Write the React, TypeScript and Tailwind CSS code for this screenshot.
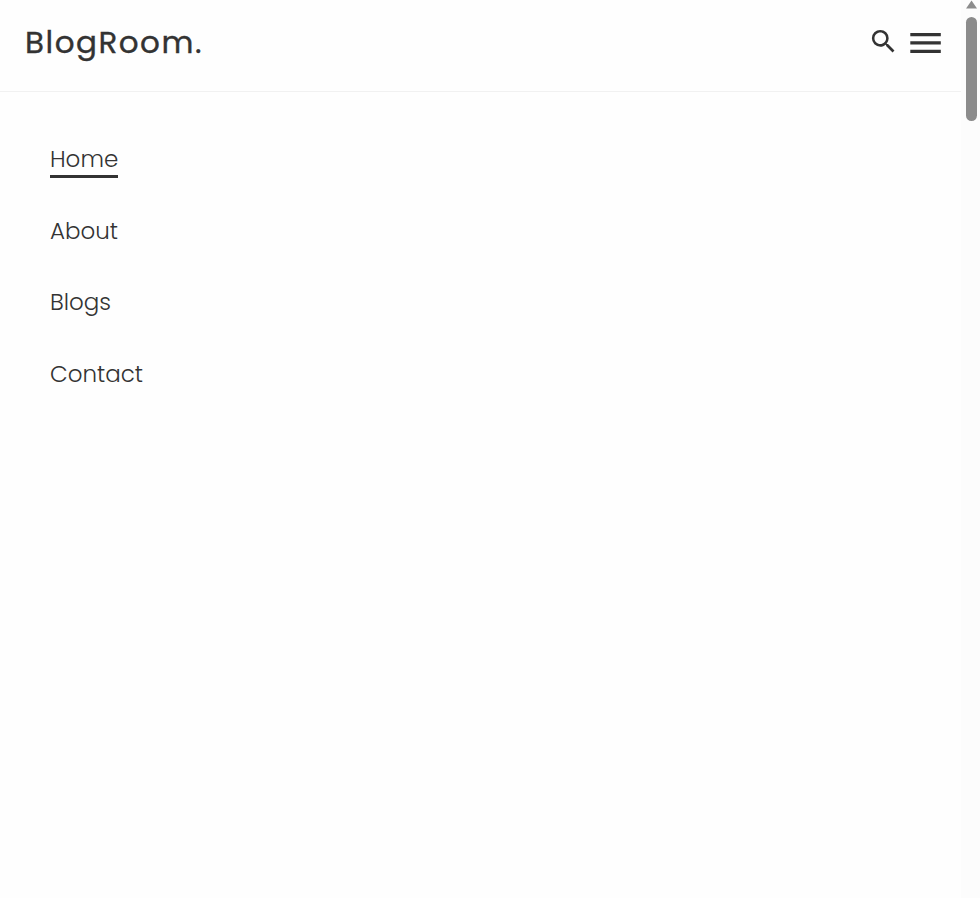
const links = [
  { label: "Home", active: true },
  { label: "About", active: false },
  { label: "Blogs", active: false },
  { label: "Contact", active: false },
];

function SearchIcon() {
  return (
    <svg className="h-[31px] w-[31px]" viewBox="0 0 24 24" fill="currentColor">
      <path d="M15.5 14h-.79l-.28-.27A6.471 6.471 0 0 0 16 9.5 6.5 6.5 0 1 0 9.5 16c1.61 0 3.09-.59 4.23-1.57l.27.28v.79l5 4.99L20.49 19l-4.99-5zm-6 0C7.01 14 5 11.99 5 9.5S7.01 5 9.5 5 14 7.01 14 9.5 11.99 14 9.5 14z" />
    </svg>
  );
}

function MenuIcon() {
  return (
    <svg className="h-[21px] w-[31px]" viewBox="0 0 31 21" fill="currentColor">
      <path d="M0.3 0H30.8V3.2H0.3zM0.3 8.3H30.8V11.6H0.3zM0.3 16.8H30.8V20H0.3z" />
    </svg>
  );
}

export default function App() {
  return (
    <div className="flex h-[898px] w-[980px] overflow-hidden bg-[#fefefe] font-[Poppins,Inter,sans-serif] text-[#333333] [font-feature-settings:'cv11']">
      <div className="flex flex-1 flex-col">
        <header className="flex h-[92px] items-start justify-between border-b border-[#f1f1f1] pr-5 pl-[25px]">
          <a className="mt-[20px] text-[31px] leading-[44px] tracking-[1.5px] [-webkit-text-stroke:0.35px_#333333]">BlogRoom.</a>
          <div className="flex items-start">
            <button aria-label="Search" className="mt-[26px] mr-[11px]">
              <SearchIcon />
            </button>
            <button aria-label="Menu" className="mt-[33px]">
              <MenuIcon />
            </button>
          </div>
        </header>
        <nav className="flex flex-col items-start gap-[35.6px] pt-[50px] pl-[50px] text-[23px] leading-[35px] font-light">
          {links.map((link) => (
            <a
              key={link.label}
              className={`h-9 whitespace-nowrap ${link.active ? "w-[68px] border-b-[3px] border-[#333333]" : ""}`}
            >
              {link.label}
            </a>
          ))}
        </nav>
      </div>
      <div className="flex w-[19px] flex-col items-center bg-[#fcfcfc] pl-[2px]">
        <svg className="h-[17px] w-[13px]" viewBox="0 0 13 17" fill="#8b8b8b">
          <path d="M6.5 0.5L12 8.5H1z" />
        </svg>
        <div className="h-[104px] w-[11px] rounded-full bg-[#8b8b8b]" />
      </div>
    </div>
  );
}
